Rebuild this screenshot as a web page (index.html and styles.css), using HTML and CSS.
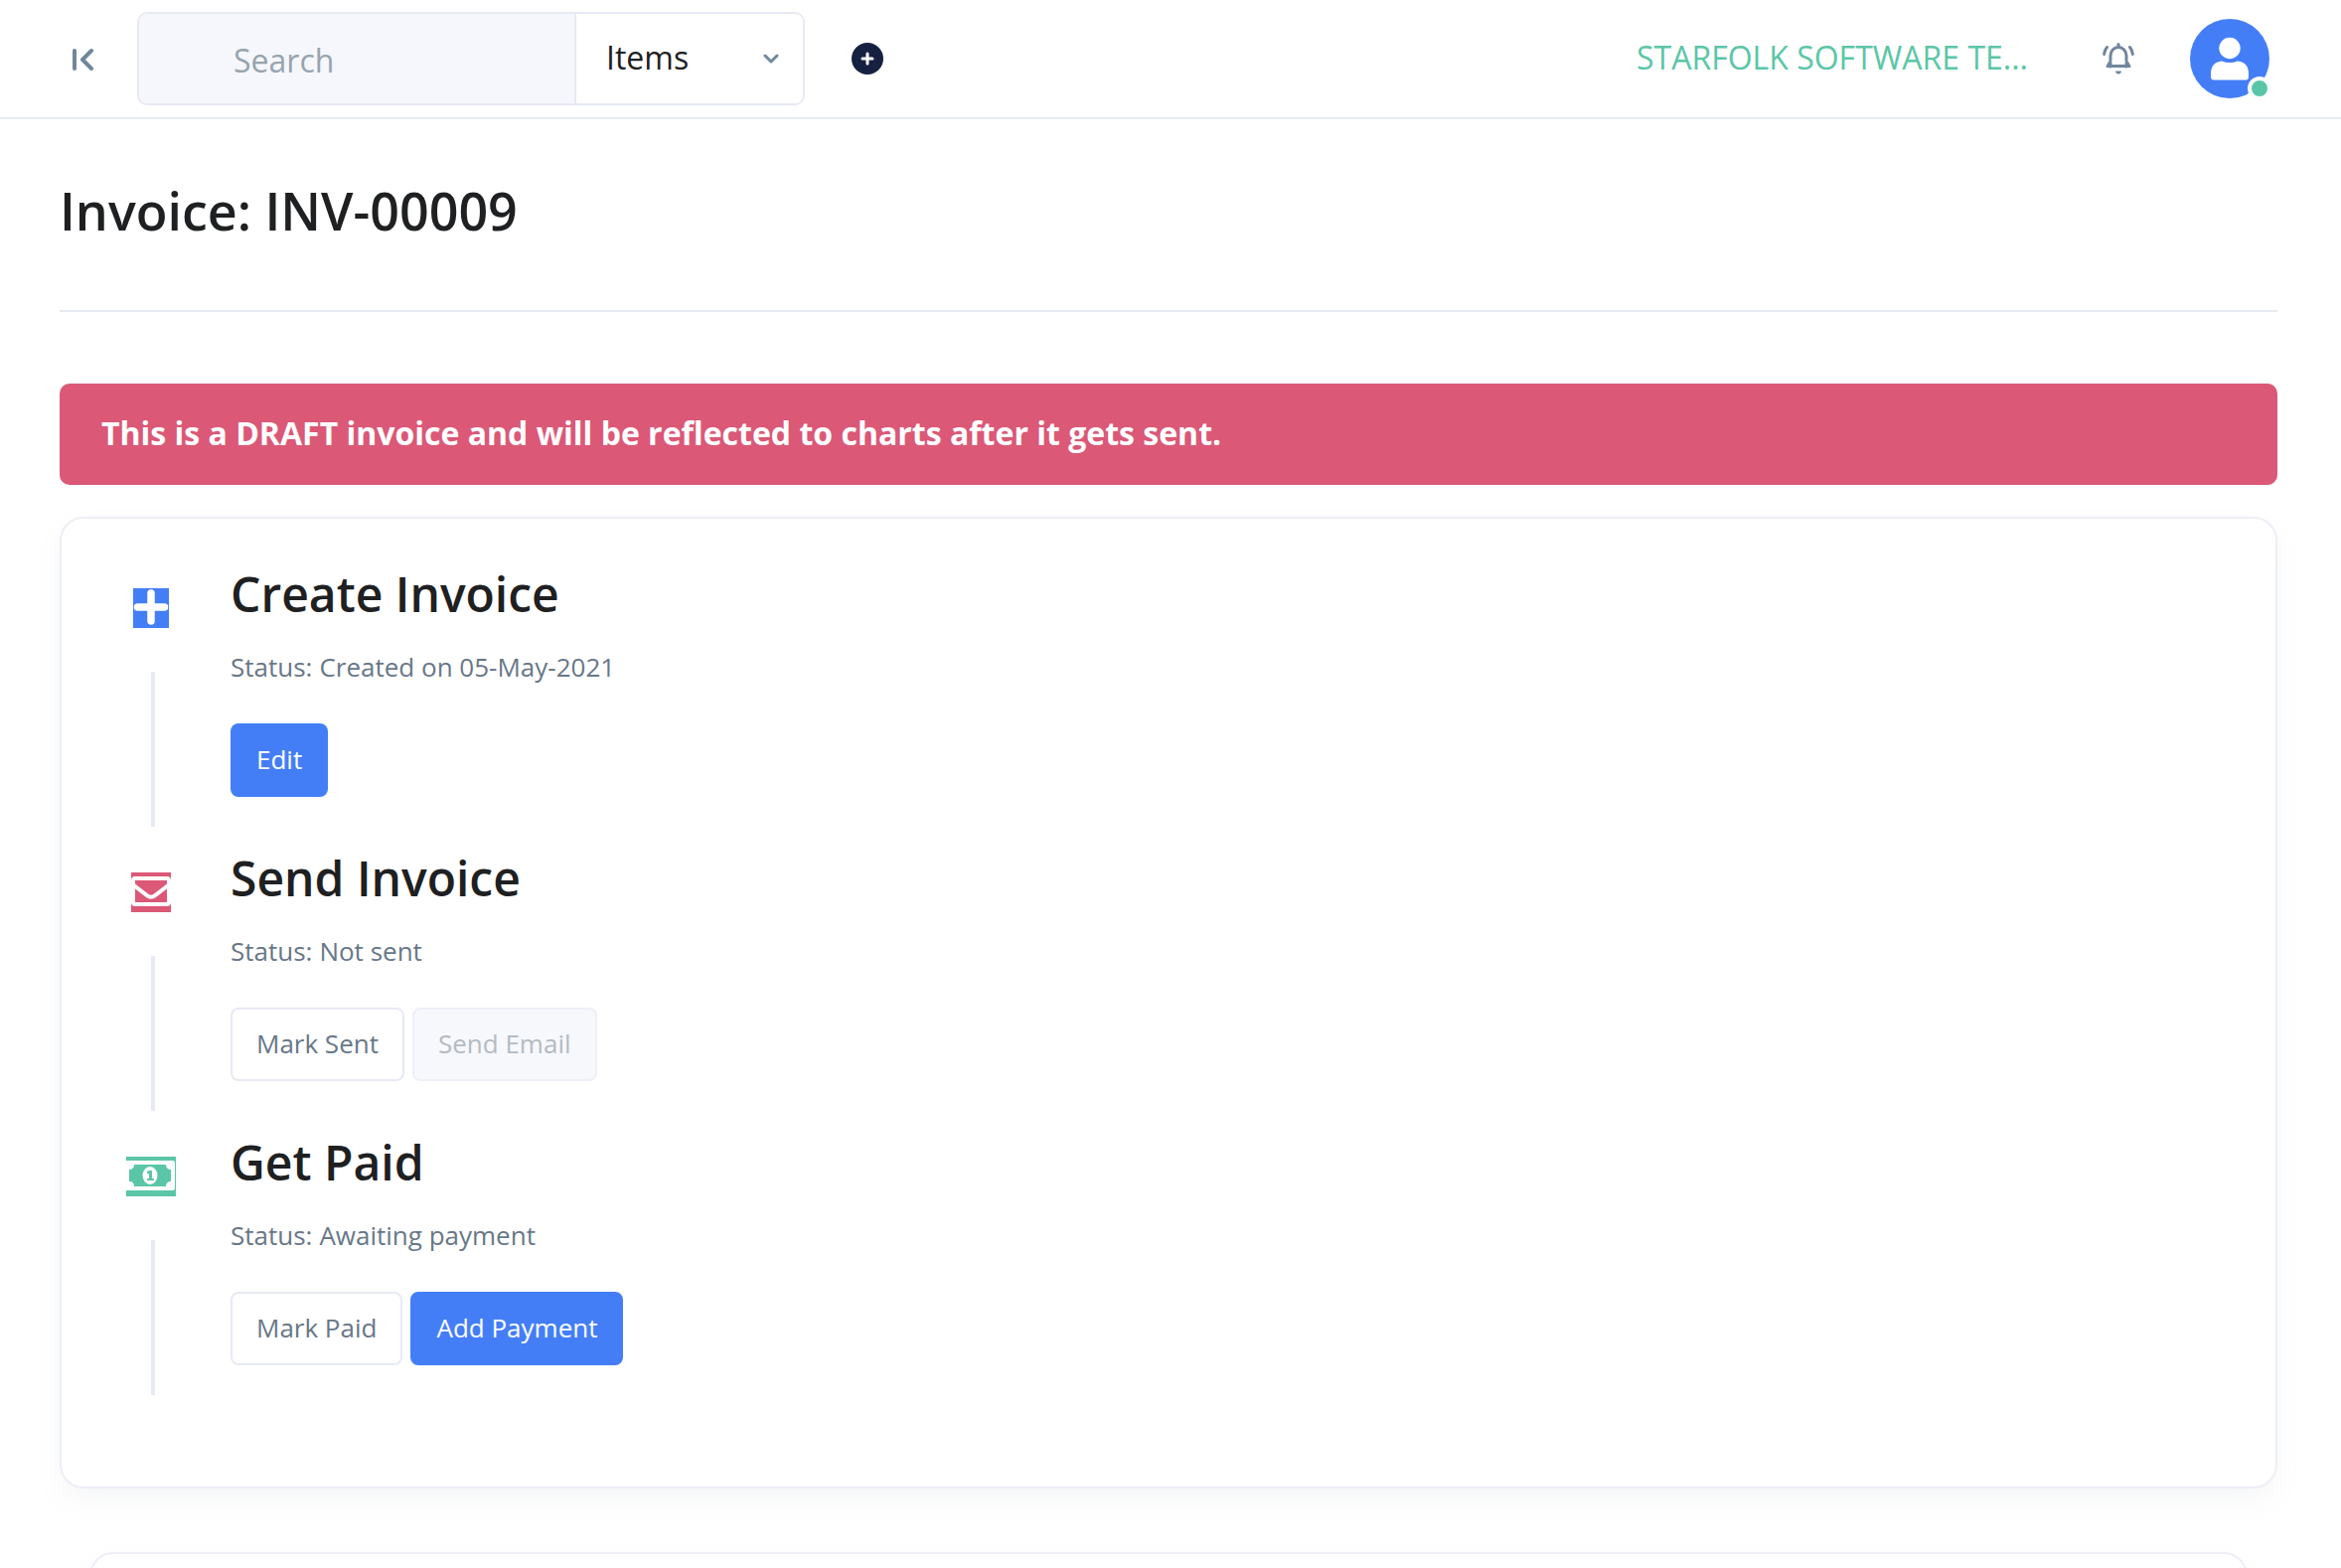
FILE: index.html
```html
<!DOCTYPE html>
<html lang="en">
<head>
<meta charset="utf-8">
<title>Invoice: INV-00009</title>
<link rel="stylesheet" href="styles.css">
</head>
<body>
<header class="topbar">
  <button class="icon-button" type="button" aria-label="Collapse sidebar">
    <svg class="icon-collapse" viewBox="0 0 22 26" fill="none" stroke="#71869d" stroke-width="4" stroke-linecap="round" stroke-linejoin="round"><path d="M3 5v18"/><path d="M20 5l-9 9 9 9"/></svg>
  </button>
  <form class="search" role="search">
    <input class="search-input" type="text" placeholder="Search" aria-label="Search">
    <div class="search-scope">
      <select class="search-select" aria-label="Search in"><option>Items</option></select>
      <svg class="icon-chevron" viewBox="0 0 16 10" fill="none" stroke="#71869d" stroke-width="3" stroke-linecap="round" stroke-linejoin="round"><path d="M2 2l6 6 6-6"/></svg>
    </div>
  </form>
  <button class="icon-button" type="button" aria-label="Add new">
    <svg class="icon-add" viewBox="0 0 32 32"><circle cx="16" cy="16" r="16" fill="#162142"/><path d="M16 11v10M11 16h10" stroke="#fff" stroke-width="3" stroke-linecap="round"/></svg>
  </button>
  <div class="account">
    <a class="company" href="#">STARFOLK SOFTWARE TE...</a>
    <button class="icon-button" type="button" aria-label="Notifications">
      <svg class="icon-bell" viewBox="0 0 32 32" fill="none" stroke="#71869d" stroke-width="3" stroke-linejoin="round" stroke-linecap="round"><path d="M16 1.500v2"/><path d="M8 24V13a8 8.500 0 0 1 16 0v11"/><path d="M6.500 20L4.500 24h23l-2-4" fill="#71869d" stroke-width="2"/><path d="M9.500 18h13v4h-13z" fill="#fff" stroke="none"/><path d="M4.500 4.500Q2 7.500 1.600 11.500M27.500 4.500Q30 7.500 30.400 11.500"/><path d="M13 28.500h6q-.5 3-3 3t-3-3z" fill="#71869d" stroke="none"/></svg>
    </button>
    <button class="avatar" type="button" aria-label="Account">
      <svg class="icon-user" viewBox="0 0 80 80"><circle cx="40" cy="40" r="40" fill="#447ef7"/><circle cx="40" cy="29.500" r="10.700" fill="#fff"/><path d="M32 42.500q8 3 16 0q11 1 11 13v3q0 3-3 3H24q-3 0-3-3v-3q0-12 11-13z" fill="#fff"/></svg>
      <span class="avatar-status"></span>
    </button>
  </div>
</header>
<main class="content">
  <h1 class="page-title">Invoice: INV-00009</h1>
  <div class="alert" role="alert">This is a DRAFT invoice and will be reflected to charts after it gets sent.</div>
  <section class="card">
    <ol class="steps">
      <li class="step">
        <div class="step-mark">
          <svg class="step-icon step-icon-create" viewBox="0 0 36 40"><path fill="#447ef7" d="M0 0h36v40H0z"/><path d="M18 5v28M4.500 19h27" stroke="#fff" stroke-width="7.500" stroke-linecap="round"/></svg>
        </div>
        <div class="step-body">
          <h2 class="step-title">Create Invoice</h2>
          <p class="step-status"><span>Status:</span><span>Created on 05-May-2021</span></p>
          <div class="actions"><button class="btn btn-primary" type="button">Edit</button></div>
        </div>
      </li>
      <li class="step">
        <div class="step-mark">
          <svg class="step-icon step-icon-send" viewBox="0 0 40 40"><path fill="#db5877" d="M0 0h40v40H0z"/><rect y="4" width="40" height="30" rx="4" fill="#fff"/><path fill="#db5877" d="M4 8h32v3.500L23 21.500q-3 2.500-6 0L4 11.500zM4 16.500l11 8.500q5 3.500 10 0l11-8.500V30H4z"/></svg>
        </div>
        <div class="step-body">
          <h2 class="step-title">Send Invoice</h2>
          <p class="step-status"><span>Status:</span><span>Not sent</span></p>
          <div class="actions"><button class="btn btn-white" type="button">Mark Sent</button><button class="btn btn-disabled" type="button" disabled>Send Email</button></div>
        </div>
      </li>
      <li class="step">
        <div class="step-mark">
          <svg class="step-icon step-icon-paid" viewBox="0 0 50 40"><path fill="#5bc6a7" d="M0 0h50v40H0z"/><path fill="#fff" d="M0 4h47q2 0 2 2v26q0 2-2 2H0z"/><path fill="#5bc6a7" d="M8 8h32q0 5 5 5v12q-5 0-5 5H8q0-5-5-5V13q5 0 5-5z"/><ellipse cx="24" cy="19" rx="7.500" ry="9" fill="#fff"/><path fill="#5bc6a7" d="M23 14h3v8h2v2h-7v-2h2v-5h-2v-2z"/></svg>
        </div>
        <div class="step-body">
          <h2 class="step-title">Get Paid</h2>
          <p class="step-status"><span>Status:</span><span>Awaiting payment</span></p>
          <div class="actions"><button class="btn btn-white" type="button">Mark Paid</button><button class="btn btn-primary" type="button">Add Payment</button></div>
        </div>
      </li>
    </ol>
  </section>
  <section class="card card-document"></section>
</main>
</body>
</html>
```
FILE: styles.css
```css
*, *::before, *::after { box-sizing: border-box; }
body {
  margin: 0;
  height: 100vh;
  overflow: hidden;
  background: #fff;
  color: #1e2022;
  font-family: "Open Sans", sans-serif;
  font-size: 26px;
}
button, input, select { font: inherit; color: inherit; margin: 0; }
button { cursor: pointer; }
svg { display: block; }

.topbar {
  display: flex;
  align-items: center;
  height: 120px;
  padding: 0 72px;
  border-bottom: 2px solid #e7eaf0;
}
.icon-button { padding: 0; border: 0; background: none; }
.icon-collapse { width: 22px; height: 26px; }
.search {
  display: flex;
  width: 672px;
  height: 94px;
  margin: 0 47px 0 44px;
  border: 2px solid #e7eaf3;
  border-radius: 10px;
  overflow: hidden;
  font-size: 32px;
}
.search-input {
  flex: 1;
  min-width: 0;
  padding: 2px 95px 0;
  border: 0;
  border-right: 2px solid #e7eaf3;
  background: #f5f7fc;
}
.search-input::placeholder { color: #97a4af; opacity: 1; }
.search-scope { position: relative; width: 228px; }
.search-select {
  width: 100%;
  height: 100%;
  padding: 0 30px 4px;
  border: 0;
  background: #fff;
  appearance: none;
}
.icon-chevron {
  position: absolute;
  top: 40px;
  right: 24px;
  width: 16px;
  height: 10px;
  pointer-events: none;
}
.icon-add { width: 32px; height: 32px; }
.account {
  display: flex;
  align-items: center;
  margin-left: auto;
}
.company {
  margin-right: 75px;
  padding-bottom: 3px;
  color: #5bc6a7;
  font-size: 32px;
  text-decoration: none;
}
.icon-bell { width: 32px; height: 32px; }
.avatar {
  position: relative;
  margin-left: 56px;
  padding: 0;
  border: 0;
  background: none;
}
.icon-user { width: 80px; height: 80px; }
.avatar-status {
  position: absolute;
  right: -2px;
  bottom: -2px;
  width: 24px;
  height: 24px;
  border: 4px solid #fff;
  border-radius: 50%;
  background: #5bc6a7;
}

.content { padding: 56px 64px 0 60px; }
.page-title {
  margin: 0 0 72px;
  padding-bottom: 64px;
  border-bottom: 2px solid #e7eaf0;
  font-size: 52px;
  font-weight: 600;
  line-height: 72px;
}
.alert {
  margin-bottom: 32px;
  padding: 26px 42px 28px;
  border-radius: 10px;
  background: #db5877;
  color: #fff;
  font-size: 32px;
  font-weight: 700;
  line-height: 48px;
}
.card {
  padding: 43px 64px 73px;
  border: 2px solid #eeeef6;
  border-radius: 24px;
  background: #fff;
  box-shadow: 0 12px 24px rgba(140, 152, 164, 0.08);
}
.card-document { height: 400px; margin: 64px 30px 0; }
.steps { margin: 0; padding: 0; list-style: none; }
.step { display: flex; height: 286px; }
.step-mark {
  display: flex;
  flex-direction: column;
  align-items: center;
  width: 52px;
  margin-right: 54px;
  padding-top: 27px;
}
.step-mark::after {
  content: "";
  width: 4px;
  height: 156px;
  margin: 44px 0 0 4px;
  background: #e7eaf3;
}
.step-icon { height: 40px; }
.step-icon-create { width: 36px; }
.step-icon-send { width: 40px; }
.step-icon-paid { width: 50px; }
.step-title {
  margin: 0;
  font-size: 48px;
  font-weight: 600;
  line-height: 66px;
}
.step-status {
  display: flex;
  gap: 7px;
  margin: 20px 0 37px;
  color: #677788;
  line-height: 40px;
}
.actions { display: flex; gap: 8px; }
.btn {
  height: 74px;
  padding: 0 24px 2px;
  border: 2px solid transparent;
  border-radius: 8px;
}
.btn-primary { background: #447ef7; border-color: #447ef7; color: #fff; }
.btn-white { background: #fff; border-color: #e7eaf3; color: #677788; }
.btn-disabled { background: #f7f8fc; border-color: #eeeff7; color: #b3bbc4; }
```
